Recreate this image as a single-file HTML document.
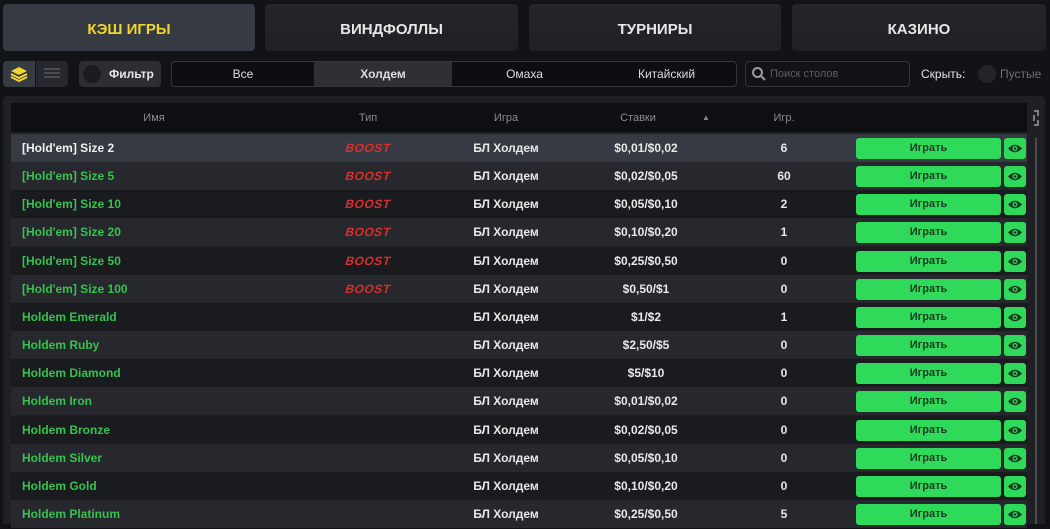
<!DOCTYPE html>
<html><head><meta charset="utf-8"><style>
*{box-sizing:border-box;margin:0;padding:0}
body{width:1050px;height:524px;overflow:hidden;background:#121317;font-family:"Liberation Sans",sans-serif;position:relative;color:#ddd}
.tab{position:absolute;top:4px;height:47px;border-radius:4px;background:linear-gradient(#24262b,#1e2024);color:#e6e6e6;font-weight:bold;font-size:15px;display:flex;align-items:center;justify-content:center;padding-top:3px}
.tab.a{background:#363a42;color:#f1d631}
.box{position:absolute;border-radius:4px}
.seg{position:absolute;top:61px;height:26px;border:1px solid #34363b;border-radius:4px;background:#0d0e11;display:flex}
.seg div{flex:none;display:flex;align-items:center;justify-content:center;font-size:12px;color:#ddd}
.panel{position:absolute;left:3px;top:96px;width:1042px;height:428px;background:#1e2024;border-radius:4px 4px 0 0}
.hdr{position:absolute;left:11px;top:103px;width:1016px;height:29px;background:#0e0f12;font-size:11px;color:#8a8c90}
.hdr span,.row span{position:absolute;top:0;transform:translateX(-50%);white-space:nowrap}
.hdr span{line-height:30px}
.row{position:absolute;left:11px;width:1016px;height:28px;font-size:12px;font-weight:bold;color:#e8e8e8}
.row span{line-height:29px}
.row .n{left:11px;transform:none;color:#35c24e}
.row .b{left:357px;transform:translateX(-50%) skewX(-15deg);color:#d7302c;font-size:12px;letter-spacing:0.5px}
.play{position:absolute;left:845px;top:4px;width:145px;height:21px;background:#2fd95a;border-radius:3px;color:#1b3a22;font-size:11px;font-weight:bold;text-align:center;line-height:21px}
.eye{position:absolute;left:993px;top:4px;width:22px;height:21px;background:#2fd95a;border-radius:3px}
</style></head><body>
<div class="tab a" style="left:3px;width:252px">КЭШ ИГРЫ</div>
<div class="tab" style="left:265px;width:253px">ВИНДФОЛЛЫ</div>
<div class="tab" style="left:529px;width:252px">ТУРНИРЫ</div>
<div class="tab" style="left:792px;width:254px">КАЗИНО</div>

<div class="box" style="left:3px;top:61px;width:32px;height:26px;background:#363a42;border-radius:4px 0 0 4px"></div>
<svg style="position:absolute;left:9px;top:65px" width="20" height="18" viewBox="0 0 20 18"><path d="M10 2 L18 6 L10 10 L2 6Z" fill="#f1d631"/><path d="M2 9 L10 13 L18 9" stroke="#f1d631" stroke-width="2" fill="none"/><path d="M2 12 L10 16 L18 12" stroke="#f1d631" stroke-width="2" fill="none"/></svg>
<div class="box" style="left:36px;top:61px;width:32px;height:26px;background:#26282d;border-radius:0 4px 4px 0"></div>
<div style="position:absolute;left:44px;top:68px;width:16px;height:10px;border-top:2px solid #4a4c52;border-bottom:2px solid #4a4c52"></div>
<div style="position:absolute;left:44px;top:72px;width:16px;height:2px;background:#4a4c52"></div>
<div class="box" style="left:79px;top:61px;width:82px;height:26px;background:#2c2e33"></div>
<div style="position:absolute;left:83px;top:65px;width:18px;height:18px;border-radius:50%;background:#1b1c20"></div>
<div style="position:absolute;left:109px;top:61px;line-height:26px;font-size:12px;font-weight:bold;color:#e6e6e6">Фильтр</div>

<div class="seg" style="left:171px;width:566px">
<div style="width:142px">Все</div>
<div style="width:138px;background:#2e3035;font-weight:bold">Холдем</div>
<div style="width:145px">Омаха</div>
<div style="width:139px">Китайский</div>
</div>
<div class="seg" style="left:745px;width:165px;background:#121317"><div style="padding-left:24px;color:#5d5f64;font-size:11px">Поиск столов</div></div>
<svg style="position:absolute;left:751px;top:66px" width="16" height="16"><circle cx="6.5" cy="6.5" r="4.5" stroke="#9a9ca0" stroke-width="2" fill="none"/><path d="M10 10 L14 14" stroke="#9a9ca0" stroke-width="2"/></svg>
<div style="position:absolute;left:921px;top:61px;line-height:26px;font-size:12px;color:#e6e6e6">Скрыть:</div>
<div style="position:absolute;left:978px;top:65px;width:18px;height:18px;border-radius:50%;background:#222428"></div>
<div style="position:absolute;left:1000px;top:61px;line-height:26px;font-size:12px;color:#6d6f74">Пустые</div>

<div class="panel"></div>
<div class="hdr">
<span style="left:143px">Имя</span><span style="left:357px">Тип</span><span style="left:495px">Игра</span><span style="left:627px">Ставки</span><span style="left:695px;font-size:8px">▲</span><span style="left:773px">Игр.</span>
</div>
<svg style="position:absolute;left:1031px;top:109px" width="10" height="18"><path d="M3 2 L7 2 L7 7 M7 11 L7 16 L3 16 M3 12 L3 6" stroke="#9a9ca0" stroke-width="1.5" fill="none"/></svg>
<div style="position:absolute;left:1035px;top:138px;width:2px;height:386px;background:#4a4c52"></div>

<div id="rows"></div>
<script>
const d=[["[Hold'em] Size 2",1,"$0,01/$0,02",6],["[Hold'em] Size 5",1,"$0,02/$0,05",60],["[Hold'em] Size 10",1,"$0,05/$0,10",2],["[Hold'em] Size 20",1,"$0,10/$0,20",1],["[Hold'em] Size 50",1,"$0,25/$0,50",0],["[Hold'em] Size 100",1,"$0,50/$1",0],["Holdem Emerald",0,"$1/$2",1],["Holdem Ruby",0,"$2,50/$5",0],["Holdem Diamond",0,"$5/$10",0],["Holdem Iron",0,"$0,01/$0,02",0],["Holdem Bronze",0,"$0,02/$0,05",0],["Holdem Silver",0,"$0,05/$0,10",0],["Holdem Gold",0,"$0,10/$0,20",0],["Holdem Platinum",0,"$0,25/$0,50",5]];
let h="";d.forEach((r,i)=>{const bg=i==0?"#363a42":(i%2?"#26282d":"#1a1b1f");
h+=`<div class="row" style="top:${134+i*28.15}px;background:${bg}"><span class="n" style="${i==0?'color:#f0f0f0':''}">${r[0]}</span>${r[1]?'<span class="b">BOOST</span>':''}<span style="left:495px">БЛ Холдем</span><span style="left:635px">${r[2]}</span><span style="left:773px">${r[3]}</span><div class="play">Играть</div><div class="eye"><svg width="22" height="21"><path d="M4 10.5 Q11 3 18 10.5 Q11 18 4 10.5Z" fill="#1b3a22"/><circle cx="11" cy="10.5" r="2.5" fill="#2fd95a"/><circle cx="11" cy="10.5" r="1.3" fill="#1b3a22"/></svg></div></div>`});
document.getElementById("rows").innerHTML=h;
</script>
</body></html>
